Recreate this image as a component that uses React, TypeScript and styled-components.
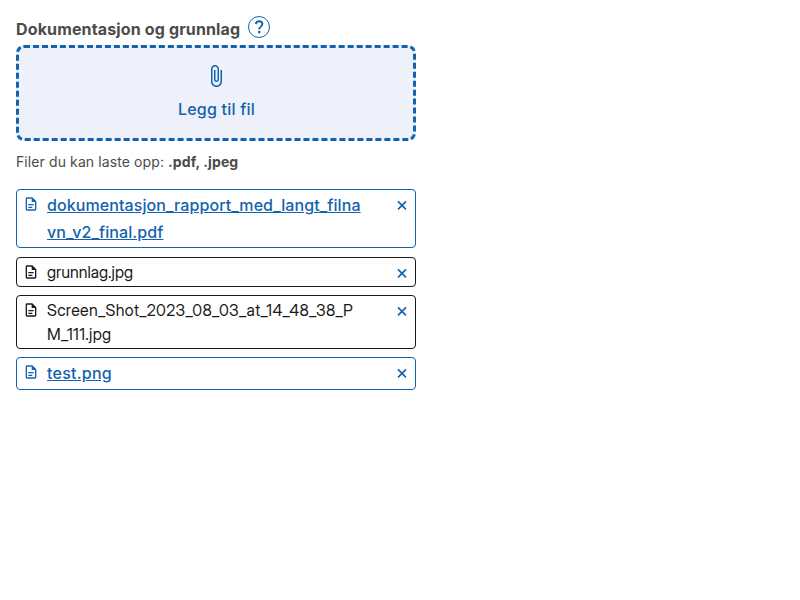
import React from 'react';
import styled, { createGlobalStyle } from 'styled-components';

const BLUE = '#1362ae';
const INK = '#1a1a1a';

const Global = createGlobalStyle`
  * { box-sizing: border-box; }
  body { margin: 0; background: #fff; font-family: Inter, sans-serif; color: #4b4b4b; }
  button { font-family: inherit; cursor: pointer; }
`;
const Page = styled.main`padding: 16px; width: 432px;`;
const Header = styled.div`display: flex; align-items: flex-start; gap: 8px; height: 29px;`;
const Label = styled.span`font-weight: 700; font-size: 16px; line-height: 26px; letter-spacing: 0.14px;`;
const HelpButton = styled.button`
  width: 22px; height: 22px; padding: 0; border: 0; background: none; color: ${BLUE}; display: flex;
`;
const DropZone = styled.button`
  display: flex; flex-direction: column; align-items: center; width: 400px; height: 96px; padding: 16px 0 0;
  border: 3px dashed ${BLUE}; border-radius: 8px; background: #eef1fa; color: ${BLUE};
  font-size: 16px; font-weight: 500; line-height: 24px; letter-spacing: 0.22px; gap: 9px;
`;
const DropLabel = styled.span`padding-left: 1px;`;
const Hint = styled.p`
  margin: 10px 0 16px; font-size: 14px; line-height: 22px; letter-spacing: 0.1px;
`;
const List = styled.ul`list-style: none; margin: 0; padding: 0; display: flex; flex-direction: column; gap: 8px;`;
const Item = styled.li<{ $link: boolean }>`
  display: flex; align-items: flex-start;
  border: 1px solid ${p => (p.$link ? BLUE : INK)}; border-radius: 4px;
  color: ${p => (p.$link ? BLUE : INK)};
  padding: 2px 5px ${p => (p.$link ? 1 : 2)}px 6px;
  margin-bottom: ${p => (p.$link ? 1 : 0)}px;
  min-height: ${p => (p.$link ? 33 : 30)}px;
`;
const Name = styled.span<{ $tracking: number }>`
  width: 317px; margin-left: 8px; word-break: break-all;
  font: 400 16px/24px 'Inter Display', Inter, sans-serif; letter-spacing: ${p => p.$tracking}px;
`;
const NameLink = styled.a<{ $tracking: number }>`
  width: 317px; margin-left: 8px; word-break: break-all; color: inherit;
  font-size: 16px; font-weight: 500; line-height: 27px;
  letter-spacing: ${p => p.$tracking}px; text-decoration: underline;
`;
const Remove = styled.button`
  margin: 5px 0 0 auto; border: 0; padding: 0; background: none; color: ${BLUE}; display: flex;
`;
const DocIcon = styled.svg`display: block; flex: none; margin-top: 4px;`;

const files = [
  { name: 'dokumentasjon_rapport_med_langt_filnavn_v2_final.pdf', link: true, tracking: 0.09 },
  { name: 'grunnlag.jpg', link: false, tracking: 0 },
  { name: 'Screen_Shot_2023_08_03_at_14_48_38_PM_111.jpg', link: false, tracking: 0.32 },
  { name: 'test.png', link: true, tracking: 0.25 },
];

export default function App() {
  return (
    <Page>
      <Global />
      <Header>
        <Label>Dokumentasjon og grunnlag</Label>
        <HelpButton aria-label="Hjelp">
          <svg width="22" height="22" viewBox="0 0 22 22" fill="none" stroke="currentColor">
            <circle cx="11" cy="11" r="10.5" />
            <path d="M7.8 8C8.1 6.2 9.4 5.2 11.1 5.2c2 0 3.3 1.2 3.3 2.9 0 2.4-3.2 2.7-3.2 5.3" strokeWidth="1.9" />
            <circle cx="11.2" cy="16.1" r="1.3" fill="currentColor" stroke="none" />
          </svg>
        </HelpButton>
      </Header>
      <DropZone>
        <svg width="24" height="24" viewBox="0 0 24 24" fill="currentColor">
          <path d="M16.5 6v11.5c0 2.21-1.79 4-4 4s-4-1.79-4-4V5c0-1.38 1.12-2.5 2.5-2.5s2.5 1.12 2.5 2.5v10.5c0 .55-.45 1-1 1s-1-.45-1-1V6H10v9.5c0 1.38 1.12 2.5 2.5 2.5s2.5-1.12 2.5-2.5V5c0-2.21-1.79-4-4-4S7 2.79 7 5v12.5c0 3.04 2.46 5.5 5.5 5.5s5.5-2.46 5.5-5.5V6h-1.5z" />
        </svg>
        <DropLabel>Legg til fil</DropLabel>
      </DropZone>
      <Hint>Filer du kan laste opp: <b>.pdf, .jpeg</b></Hint>
      <List>
        {files.map(f => (
          <Item key={f.name} $link={f.link}>
            <DocIcon width="16" height="16" viewBox="0 0 24 24" fill="currentColor">
              <path d="M8 16h6v2H8zm0-4h8v2H8zm6-10H6c-1.1 0-2 .9-2 2v16c0 1.1.89 2 1.99 2H18c1.1 0 2-.9 2-2V8l-6-6zm4 18H6V4h7v5h5v11z" />
            </DocIcon>
            {f.link
              ? <NameLink href="#" $tracking={f.tracking}>{f.name}</NameLink>
              : <Name $tracking={f.tracking}>{f.name}</Name>}
            <Remove aria-label="Slett fil">
              <svg width="16" height="16" viewBox="0 -0.6 24 24" stroke="currentColor" strokeWidth="2.4">
                <path d="M6 6l12 12M18 6L6 18" />
              </svg>
            </Remove>
          </Item>
        ))}
      </List>
    </Page>
  );
}
